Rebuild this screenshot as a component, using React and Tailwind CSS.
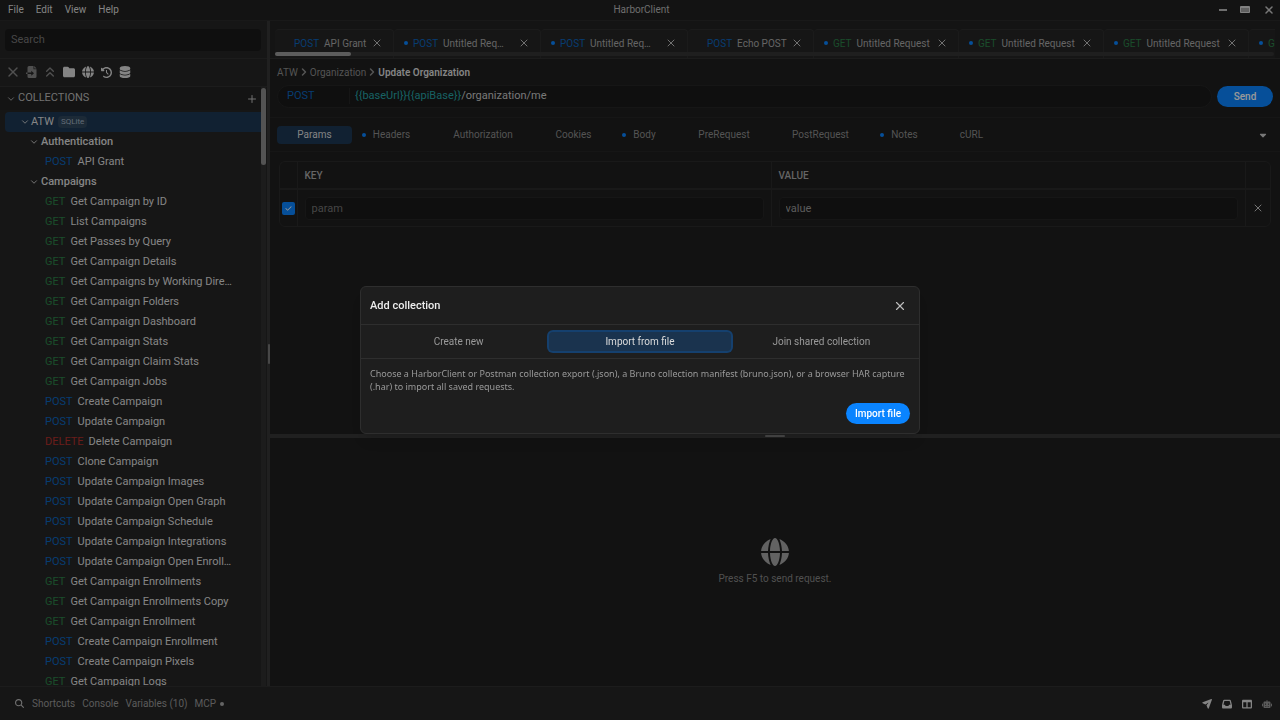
import React, { useState } from "react";
import {
    FaCaretDown,
    FaCheck,
    FaClockRotateLeft,
    FaDatabase,
    FaFolder,
    FaInbox,
    FaMagnifyingGlass,
    FaRobot,
    FaTableColumns,
} from "react-icons/fa6";
import { ChevronDown, ChevronRight, ChevronsUp, Plus, X } from "lucide-react";

const METHOD_COLORS = {
    GET: "text-[#2c8048]",
    POST: "text-[#0c64bd]",
    DELETE: "text-[#b3302c]",
};

const REQUESTS = [
    ["GET", "Get Campaign by ID"],
    ["GET", "List Campaigns"],
    ["GET", "Get Passes by Query"],
    ["GET", "Get Campaign Details"],
    ["GET", "Get Campaigns by Working Dire…"],
    ["GET", "Get Campaign Folders"],
    ["GET", "Get Campaign Dashboard"],
    ["GET", "Get Campaign Stats"],
    ["GET", "Get Campaign Claim Stats"],
    ["GET", "Get Campaign Jobs"],
    ["POST", "Create Campaign"],
    ["POST", "Update Campaign"],
    ["DELETE", "Delete Campaign"],
    ["POST", "Clone Campaign"],
    ["POST", "Update Campaign Images"],
    ["POST", "Update Campaign Open Graph"],
    ["POST", "Update Campaign Schedule"],
    ["POST", "Update Campaign Integrations"],
    ["POST", "Update Campaign Open Enroll…"],
    ["GET", "Get Campaign Enrollments"],
    ["GET", "Get Campaign Enrollments Copy"],
    ["GET", "Get Campaign Enrollment"],
    ["POST", "Create Campaign Enrollment"],
    ["POST", "Create Campaign Pixels"],
    ["GET", "Get Campaign Logs"],
];

const OPEN_TABS = [
    { method: "POST", name: "API Grant", width: "w-[119px]" },
    { method: "POST", name: "Untitled Req…", dirty: true, width: "w-[147px]" },
    { method: "POST", name: "Untitled Req…", dirty: true, width: "w-[147px]" },
    { method: "POST", name: "Echo POST", width: "w-[126px]" },
    { method: "GET", name: "Untitled Request", dirty: true, width: "w-[145px]" },
    { method: "GET", name: "Untitled Request", dirty: true, width: "w-[145px]" },
    { method: "GET", name: "Untitled Request", dirty: true, width: "w-[145px]" },
    { method: "GET", name: "Untitled Request", dirty: true, width: "w-[145px]" },
];

const SECTIONS = [
    { name: "Params", width: "w-[75px]" },
    { name: "Headers", dot: true, width: "w-[79px]" },
    { name: "Authorization", width: "w-[104px]" },
    { name: "Cookies", width: "w-[77px]" },
    { name: "Body", dot: true, width: "w-[65px]" },
    { name: "PreRequest", width: "w-[94px]" },
    { name: "PostRequest", width: "w-[99px]" },
    { name: "Notes", dot: true, width: "w-[69px]" },
    { name: "cURL", width: "w-[65px]" },
];

const Globe = ({ className }) => (
    <svg viewBox="0 0 28 28" fill="currentColor" className={className}>
        <path d="M7 13H0.1C0.5 7.9 3.9 3.4 9.6 1 8.2 4.400 7.200 8.400 7 13zM7 15C7.200 19.600 8.200 23.600 9.600 27 3.900 24.600 0.500 20.100 0.100 15z" />
        <path d="M9 13C9.200 5.800 11.500 0 14 0s4.800 5.800 5 13zM9 15h10c-.2 7.200-2.500 13-5 13S9.200 22.200 9 15z" />
        <path d="M21 13c-.2-4.600-1.200-8.600-2.600-12 5.700 2.400 9.100 6.900 9.500 12zM21 15h6.900c-.4 5.100-3.800 9.600-9.500 12 1.400-3.400 2.400-7.400 2.600-12z" />
    </svg>
);

const FileImport = ({ className }) => (
    <svg viewBox="0 0 24 24" fill="currentColor" fillRule="evenodd" className={className}>
        <path d="M3 3a3 3 0 0 1 3-3h9v6.500h6V21a3 3 0 0 1-3 3H6a3 3 0 0 1-3-3v-5h7.500v3.500L16 14.500 10.500 9.500v3.500H3zM16.500 0L21 5h-4.500zM0 13h3v3H0z" />
    </svg>
);

const Plane = ({ className }) => (
    <svg viewBox="32 32 576 576" fill="currentColor" className={className}>
        <path d="M568.400 37.700C578.200 34.200 589 36.700 596.400 44C603.800 51.300 606.200 62.200 602.700 72L424.700 568.900C419.700 582.800 406.600 592 391.900 592C377.700 592 364.900 583.400 359.600 570.300L295.400 412.300C290.900 401.300 292.900 388.700 300.600 379.700L395.100 267.300C400.200 261.200 399.800 252.300 394.200 246.700C388.600 241.100 379.600 240.700 373.600 245.800L261.200 340.100C252.100 347.700 239.600 349.700 228.600 345.300L70.100 280.800C57 275.500 48.400 262.700 48.400 248.500C48.400 233.800 57.600 220.700 71.500 215.700L568.400 37.700z" />
    </svg>
);

const TitleBar = () => (
    <header className="flex h-[21px] shrink-0 items-center border-b border-[#2a2a2a] bg-[#202020] pr-[5px] pb-px pl-2 text-[10px] text-[#dcdcdc]">
        <nav className="flex flex-1 gap-3">
            <button>File</button>
            <button>Edit</button>
            <button>View</button>
            <button>Help</button>
        </nav>
        <div className="text-[#b8b8b8]">HarborClient</div>
        <div className="flex flex-1 items-center justify-end gap-[13px]">
            <button aria-label="Minimize" className="h-0.5 w-2 bg-[#b8b8b8]" />
            <button aria-label="Maximize" className="h-[7px] w-[10px] rounded-[1px] border border-t-2 border-[#d8d8d8] bg-[#a0a0a0]" />
            <button aria-label="Close"><X className="h-3 w-3 text-[#c8c8c8]" strokeWidth={3} /></button>
        </div>
    </header>
);

const TOOLS = [
    { label: "Close all", dim: true, icon: <X className="h-4 w-4 shrink-0" /> },
    { label: "Import", dim: true, icon: <FileImport className="h-3 w-3" /> },
    { label: "Collapse", dim: true, icon: <ChevronsUp className="h-4 w-4 shrink-0" /> },
    { label: "New folder", icon: <FaFolder className="h-3 w-3" /> },
    { label: "Environments", icon: <Globe className="h-3 w-3" /> },
    { label: "History", icon: <FaClockRotateLeft className="h-[11px] w-[11px]" /> },
    { label: "Databases", icon: <FaDatabase className="h-3 w-3" /> },
];

const Sidebar = () => (
    <aside className="flex w-[267px] shrink-0 flex-col bg-[#262626]">
        <div className="border-b border-[#303030] pt-2 pr-1.5 pb-[7px] pl-[5px]">
            <input
                type="search"
                aria-label="Search"
                placeholder="Search"
                className="block h-[22px] w-full rounded bg-[#191919] px-1.5 pb-px text-[11px] placeholder:text-[#777]"
            />
        </div>
        <div className="h-7 shrink-0 border-b border-[#303030] px-[5px]">
            <div className="flex h-[26px] w-[128px] items-center justify-between text-[#dcdcdc]">
                {TOOLS.map((tool) => (
                    <button
                        key={tool.label}
                        aria-label={tool.label}
                        className={`flex w-4 justify-center ${tool.dim ? "text-[#868686]" : ""}`}
                    >
                        {tool.icon}
                    </button>
                ))}
            </div>
        </div>
        <div className="flex min-h-0 flex-1">
            <div className="flex min-w-0 flex-1 flex-col overflow-hidden">
                <div className="mb-0.5 flex h-[23px] shrink-0 items-center bg-[#222] pr-[3px] pl-1.5 text-[11px] text-[#bdbdbd]">
                    <ChevronDown className="mr-0.5 h-2.5 w-2.5" strokeWidth={2} />
                    <h2 className="flex-1">COLLECTIONS</h2>
                    <button aria-label="Add collection"><Plus className="h-3 w-3" strokeWidth={2} /></button>
                </div>
                <ul className="min-h-0 flex-1 overflow-hidden text-[11px] text-[#dedede]">
                    <li className="ml-[5px] flex h-5 items-center rounded-l bg-[#1d3854] pl-[15px]">
                        <ChevronDown className="mr-px h-2.5 w-2.5" strokeWidth={2} />
                        ATW
                        <span className="ml-1 rounded-sm bg-[#30465c] px-[3px] text-[8px] leading-3 text-[#a4b4c4]">SQLite</span>
                    </li>
                    <li className="flex h-5 items-center pl-[29px] font-medium">
                        <ChevronDown className="mr-0.5 h-2.5 w-2.5" strokeWidth={2} />
                        Authentication
                    </li>
                    <Request method="POST" name="API Grant" />
                    <li className="flex h-5 items-center pl-[29px] font-medium">
                        <ChevronDown className="mr-0.5 h-2.5 w-2.5" strokeWidth={2} />
                        Campaigns
                    </li>
                    {REQUESTS.map(([method, name]) => (
                        <Request key={name} method={method} name={name} />
                    ))}
                </ul>
            </div>
            <div className="w-[5px] bg-[#303030] pt-px">
                <div className="h-[77px] rounded-full bg-[#8a8a8a]" />
            </div>
            <div className="w-px" />
        </div>
    </aside>
);

const Request = ({ method, name }) => (
    <li className="flex h-5 items-center gap-[5px] pl-[45px]">
        <span className={METHOD_COLORS[method]}>{method}</span>
        <span className="whitespace-nowrap">{name}</span>
    </li>
);

const OpenTabs = () => (
    <div className="relative h-[38px] shrink-0 overflow-hidden border-b border-[#303030] bg-[#222] pt-2 pr-[5px] pl-[5px]">
        <div className="flex h-[29px] overflow-hidden">
            {OPEN_TABS.map((tab, i) => (
                <div
                    key={i}
                    className={`${tab.width} flex shrink-0 items-center rounded-t border-t border-r border-[#2e2e2e] bg-[#262626] pr-[10px] pb-0.5 pl-[10px] text-[10px]`}
                >
                    <span className={`mr-[5px] h-1 w-1 shrink-0 rounded-full ${tab.dirty ? "bg-[#0a84ff]" : ""}`} />
                    <span className={`mr-[5px] ${METHOD_COLORS[tab.method]}`}>{tab.method}</span>
                    <span className="flex-1 whitespace-nowrap text-[#a8a8a8]">{tab.name}</span>
                    <button aria-label="Close tab">
                        <X className="h-3 w-3 text-[#bcbcbc]" strokeWidth={2} />
                    </button>
                </div>
            ))}
        </div>
        <div className="absolute right-[6px] bottom-0.5 left-[5px] h-1 rounded-full bg-[#343434]">
            <div className="h-1 w-[76px] rounded-full bg-[#9a9a9a]" />
        </div>
    </div>
);

const ParamsTable = () => (
    <div className="mx-[9px] mt-[9px] overflow-hidden rounded-md border border-[#2a2a2a]">
        <table className="w-full table-fixed border-collapse text-left text-[10px]">
            <thead>
                <tr className="h-[27px] border-b-2 border-[#2a2a2a] text-[#a8a8a8]">
                    <th aria-label="Enabled" className="w-[17px] border-r border-[#2a2a2a]" />
                    <th className="border-r border-[#2a2a2a] px-[7px] font-medium">KEY</th>
                    <th className="border-r border-[#2a2a2a] px-[7px] font-medium">VALUE</th>
                    <th aria-label="Remove" className="w-[25px]" />
                </tr>
            </thead>
            <tbody>
                <tr className="h-[37px]">
                    <td className="border-r border-[#2a2a2a]">
                        <label className="relative mx-auto block h-[13px] w-[13px]">
                            <input
                                type="checkbox"
                                defaultChecked
                                aria-label="Enable param"
                                className="block h-[13px] w-[13px] appearance-none rounded-[2px] bg-[#0a84ff]"
                            />
                            <FaCheck className="absolute top-[3px] left-[3px] h-[7px] w-[7px] text-white" />
                        </label>
                    </td>
                    <td className="border-r border-[#2a2a2a] px-[7px]">
                        <input
                            aria-label="Key"
                            placeholder="param"
                            className="block h-[23px] w-full rounded border border-[#262626] bg-[#191919] px-1.5 text-[11px] placeholder:text-[#757575]"
                        />
                    </td>
                    <td className="border-r border-[#2a2a2a] px-[7px]">
                        <input
                            aria-label="Value"
                            defaultValue="value"
                            className="block h-[23px] w-full rounded border border-[#262626] bg-[#191919] px-1.5 text-[11px] text-[#9a9a9a]"
                        />
                    </td>
                    <td>
                        <button aria-label="Remove param" className="mx-auto block">
                            <X className="h-3 w-3 text-[#c4c4c4]" strokeWidth={2} />
                        </button>
                    </td>
                </tr>
            </tbody>
        </table>
    </div>
);

const RequestPane = () => (
    <section className="flex min-h-0 flex-[375] flex-col overflow-hidden">
        <div className="shrink-0 border-b border-[#262626] px-[7px] pt-[5px] pb-[9px]">
            <div className="flex h-4 items-center text-[10px] text-[#8c8c8c]">
                <a href="#atw">ATW</a>
                <ChevronRight className="h-3 w-3" strokeWidth={3} />
                <a href="#organization">Organization</a>
                <ChevronRight className="h-3 w-3" strokeWidth={3} />
                <span className="font-semibold text-[#dcdcdc]">Update Organization</span>
            </div>
            <div className="mt-[5px] flex items-center gap-[5px]">
                <div className="flex h-[23px] flex-1 items-center rounded-full border border-[#262626] bg-[#191919] pb-px text-[11px]">
                    <select
                        aria-label="Method"
                        className="w-[72px] appearance-none border-r border-[#262626] pl-[9px] text-[#0c64bd]"
                    >
                        <option>POST</option>
                    </select>
                    <div role="textbox" aria-label="URL" contentEditable suppressContentEditableWarning className="flex-1 pl-[5px] text-[#c8c8c8]">
                        <span className="text-[#27a3a6]">{"{{baseUrl}}{{apiBase}}"}</span>/organization/me
                    </div>
                </div>
                <button className="h-[21px] w-14 rounded-full bg-[#0a84ff] text-[10px] font-medium text-white">Send</button>
            </div>
        </div>
        <div className="flex h-[34px] shrink-0 items-center border-b border-[#262626] px-[7px] text-[10px] text-[#8c8c8c]">
            {SECTIONS.map((s, i) => (
                <button
                    key={s.name}
                    className={`${s.width} relative h-[18px] rounded ${i === 0 ? "bg-[#1d3854] text-[#dcdcdc]" : ""}`}
                >
                    {s.dot && <span className="absolute top-[7px] left-[10px] h-1 w-1 rounded-full bg-[#0a84ff]" />}
                    {s.name}
                </button>
            ))}
            <button aria-label="More" className="mr-[5px] ml-auto">
                <FaCaretDown className="h-2.5 w-2.5 text-[#c8c8c8]" />
            </button>
        </div>
        <ParamsTable />
    </section>
);

const ResponsePane = () => (
    <section className="flex min-h-0 flex-[248] flex-col items-center justify-center gap-1">
        <Globe className="h-7 w-7 text-[#a4a4a4]" />
        <p className="text-[10px] leading-[17px] text-[#868686]">Press F5 to send request.</p>
    </section>
);

const StatusBar = () => (
    <footer className="flex h-[34px] shrink-0 items-center gap-2 border-t border-[#303030] bg-[#262626] px-2 text-[10px] text-[#989898]">
        <div className="flex flex-1 items-center gap-[7px] pl-[7px]">
            <button className="flex items-center gap-2">
                <FaMagnifyingGlass className="h-[9px] w-[9px] text-[#bcbcbc]" />
                Shortcuts
            </button>
            <button>Console</button>
            <button>Variables (10)</button>
            <button className="flex items-center gap-1">
                MCP
                <span className="h-1 w-1 rounded-full bg-[#a8a8a8]" />
            </button>
        </div>
        <div className="flex items-center gap-[10px] text-[#dcdcdc]">
            <button aria-label="Send"><Plane className="h-[10px] w-[10px]" /></button>
            <button aria-label="Inbox"><FaInbox className="h-[10px] w-[10px]" /></button>
            <button aria-label="Columns"><FaTableColumns className="h-[10px] w-[10px]" /></button>
            <button aria-label="Assistant"><FaRobot className="h-[10px] w-[10px] text-[#989898]" /></button>
        </div>
    </footer>
);

const AddCollectionDialog = () => {
    const [tab, setTab] = useState("Import from file");

    return (
        <div className="fixed inset-0 flex items-center justify-center bg-black/40">
            <div role="dialog" aria-label="Add collection" className="w-[560px] rounded-md border border-[#2e2e2e] bg-[#1e1e1e] shadow-lg">
                <div className="flex h-[38px] items-center justify-between border-b border-[#2e2e2e] pr-3 pl-[9px]">
                    <h2 className="pt-px text-[11px] font-medium text-[#ececec]">Add collection</h2>
                    <button aria-label="Close"><X className="h-[14px] w-[14px] text-[#bcbcbc]" strokeWidth={2} /></button>
                </div>
                <div className="grid grid-cols-3 border-b border-[#2e2e2e] px-[7px] py-[7px] text-[10px]">
                    {["Create new", "Import from file", "Join shared collection"].map((name) => (
                        <button
                            key={name}
                            onClick={() => setTab(name)}
                            className={`h-[19px] rounded ${name === tab ? "bg-[#1a334e] text-[#dcdcdc] ring-2 ring-[#15406e]" : "text-[#9a9a9a]"}`}
                        >
                            {name}
                        </button>
                    ))}
                </div>
                <div className="px-[9px] pt-2 pb-[9px]">
                    <p className="font-['Noto_Sans',sans-serif] text-[9px] leading-[13px] text-[#9a9a9a]">
                        Choose a HarborClient or Postman collection export (.json), a Bruno collection manifest (bruno.json), or a browser HAR capture
                        (.har) to import all saved requests.
                    </p>
                    <div className="mt-[10px] flex justify-end">
                        <button className="h-[21px] w-16 rounded-full bg-[#0a84ff] text-[10px] font-medium text-white">Import file</button>
                    </div>
                </div>
            </div>
        </div>
    );
};

const App = () => (
    <div className="flex h-screen flex-col overflow-hidden bg-[#1e1e1e] font-['Roboto',sans-serif]">
        <TitleBar />
        <div className="flex min-h-0 flex-1">
            <Sidebar />
            <div className="flex w-[3px] shrink-0 items-center justify-center bg-[#363636]">
                <div className="h-5 w-0.5 rounded-full bg-[#777]" />
            </div>
            <main className="flex min-w-0 flex-1 flex-col">
                <OpenTabs />
                <RequestPane />
                <div className="flex h-1 shrink-0 items-center justify-center bg-[#363636]">
                    <div className="h-0.5 w-5 rounded-full bg-[#777]" />
                </div>
                <ResponsePane />
            </main>
        </div>
        <StatusBar />
        <AddCollectionDialog />
    </div>
);

export default App;
